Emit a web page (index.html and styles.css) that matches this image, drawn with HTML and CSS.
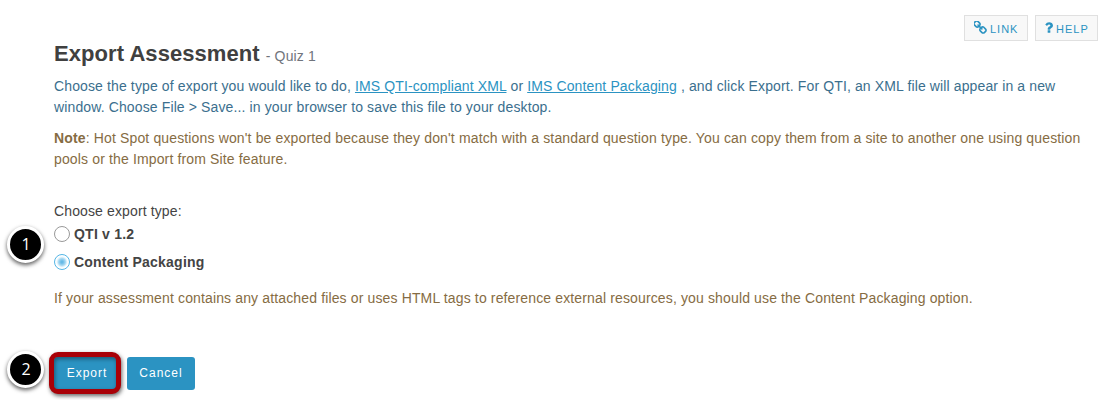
FILE: index.html
```html
<!DOCTYPE html>
<html lang="en">
<head>
<meta charset="utf-8">
<title>Export Assessment</title>
<link rel="stylesheet" href="styles.css">
</head>
<body>
<nav class="tools">
  <a class="tool"><svg class="tool-icon link-icon" viewBox="128 128 1536 1536"><path d="M1456 1216q0-40-28-68l-208-208q-28-28-68-28-42 0-72 32 3 3 19 18.500t21.500 21.500 15 19 13 25.500 3.500 27.500q0 40-28 68t-68 28q-15 0-27.500-3.500t-25.500-13-19-15-21.500-21.500-18.500-19q-33 31-33 73 0 40 28 68l206 207q27 27 68 27 40 0 68-26l147-146q28-28 28-67zm-703-705q0-40-28-68l-206-207q-28-28-68-28-39 0-68 27l-147 146q-28 28-28 67 0 40 28 68l208 208q27 27 68 27 42 0 72-31-3-3-19-18.500t-21.500-21.500-15-19-13-25.500-3.500-27.500q0-40 28-68t68-28q15 0 27.500 3.500t25.500 13 19 15 21.500 21.500 18.500 19q33-31 33-73zm895 705q0 120-85 203l-147 146q-83 83-203 83-121 0-204-85l-206-207q-83-83-83-203 0-123 88-209l-88-88q-86 88-208 88-120 0-204-84l-208-208q-84-84-84-204t85-203l147-146q83-83 203-83 121 0 204 85l206 207q83 83 83 203 0 123-88 209l88 88q86-88 208-88 120 0 204 84l208 208q84 84 84 204z"/></svg><span>LINK</span></a>
  <a class="tool"><svg class="tool-icon help-icon" viewBox="448 256 960 1280"><path d="M1088 1256v240q0 16-12 28t-28 12h-240q-16 0-28-12t-12-28v-240q0-16 12-28t28-12h240q16 0 28 12t12 28zm316-600q0 54-15.500 101t-35 76.500-55 59.500-57.500 43.500-61 35.500q-41 23-68.500 65t-27.500 67q0 17-12 32.500t-28 15.500h-240q-15 0-25.500-18.500t-10.500-37.500v-45q0-83 65-156.500t143-108.500q59-27 84-56t25-76q0-42-46.500-74t-107.500-32q-65 0-108 29-35 25-107 115-13 16-31 16-12 0-25-8l-164-125q-13-10-15.500-25t5.500-28q160-266 464-266 80 0 161 31t146 83 106 127.500 41 158.500z"/></svg><span>HELP</span></a>
</nav>
<main class="content">
  <h1 class="title">Export Assessment <small class="subtitle">- Quiz 1</small></h1>
  <p class="intro">Choose the type of export you would like to do, <a class="link">IMS QTI-compliant XML</a> or <a class="link">IMS Content Packaging</a> , and click Export. For QTI, an XML file will appear in a new<br>window. Choose File &gt; Save... in your browser to save this file to your desktop.</p>
  <p class="note"><b>Note</b>: Hot Spot questions won't be exported because they don't match with a standard question type. You can copy them from a site to another one using question<br>pools or the Import from Site feature.</p>
  <section class="options">
    <div class="prompt">Choose export type:</div>
    <label class="option"><span class="radio"></span>QTI v 1.2</label>
    <label class="option"><span class="radio selected"></span>Content Packaging</label>
    <span class="step step-choose">1</span>
  </section>
  <p class="note hint">If your assessment contains any attached files or uses HTML tags to reference external resources, you should use the Content Packaging option.</p>
  <div class="actions">
    <button class="button export">Export</button>
    <button class="button">Cancel</button>
    <span class="step step-export">2</span>
  </div>
</main>
</body>
</html>
```

FILE: styles.css
```css
* { box-sizing: border-box; }
body {
  margin: 0;
  height: 400px;
  overflow: hidden;
  background: #fff;
  color: #444;
  font: 14px/21px "Liberation Sans", Arial, sans-serif;
}
.tools {
  display: flex;
  justify-content: flex-end;
  gap: 7px;
  height: 41px;
  padding: 15px 12px 0 0;
}
.tool {
  display: flex;
  align-items: center;
  width: 64px;
  height: 26px;
  padding-left: 9px;
  border: 1px solid #e0e0e0;
  background: #f8f8f8;
  color: #2b93c2;
  font-size: 11px;
  letter-spacing: 1px;
}
.tool + .tool { width: 63px; }
.tool span { padding-top: 2px; }
.tool-icon { fill: #2b93c2; flex: none; }
.link-icon { width: 13px; height: 13px; margin-right: 3px; margin-top: -1px; }
.help-icon { width: 8px; height: 11px; margin-right: 3px; margin-top: -1px; }
.content { padding-left: 54px; white-space: nowrap; letter-spacing: .125px; }
.title {
  margin: 0;
  height: 35px;
  font-size: 22px;
  line-height: 26px;
  letter-spacing: .06px;
  color: #404040;
}
.subtitle { font-size: 14px; font-weight: 400; letter-spacing: .13px; color: #70747c; }
p { margin: 0; }
.intro { height: 52px; color: #3b6f8e; }
.link { color: #2b93c2; text-decoration: underline; }
.note { color: #866c43; letter-spacing: .143px; }
.options { position: relative; margin-top: 31px; }
.option {
  display: flex;
  align-items: center;
  height: 28px;
  gap: 4px;
  font-weight: 700;
  letter-spacing: .22px;
}
.prompt { height: 19px; line-height: 21px; }
.radio {
  width: 16px;
  height: 16px;
  border: 1px solid #999;
  border-radius: 50%;
  background: #fff;
}
.radio.selected {
  border-color: #53b5e5;
  background: radial-gradient(circle, #65b9e6 0 1px, #a8d9f2 3.5px, #e9f6fc 5px, #fff 6px);
}
.hint { margin-top: 12px; letter-spacing: .138px; }
.actions {
  position: relative;
  display: flex;
  gap: 6px;
  margin: 43px 0 0 -5px;
}
.button {
  width: 68px;
  height: 33px;
  margin-top: 5px;
  padding: 0;
  border: 0;
  border-radius: 3px;
  background: #2b93c2;
  color: #fff;
  font: 12px/31px "Liberation Sans", Arial, sans-serif;
  letter-spacing: 1px;
}
.button.export {
  width: 72px;
  height: 42px;
  margin-top: 0;
  padding-left: 4px;
  border: 5px solid #a90007;
  border-radius: 9px;
  box-shadow: 1px 2px 4px rgba(0,0,0,.6), inset 1px 2px 4px rgba(0,0,0,.4);
}
.step {
  position: absolute;
  display: flex;
  align-items: center;
  justify-content: center;
  width: 37px;
  height: 37px;
  padding: 0 0 2px 1px;
  border: 3px solid #fff;
  border-radius: 50%;
  background: #000;
  color: #fff;
  font: 16px "Open Sans", sans-serif;
  letter-spacing: 0;
  box-shadow: 0 2px 4px rgba(0,0,0,.65);
}
.step-choose { left: -47px; top: 25px; }
.step-export { left: -42px; top: -1px; }
```
